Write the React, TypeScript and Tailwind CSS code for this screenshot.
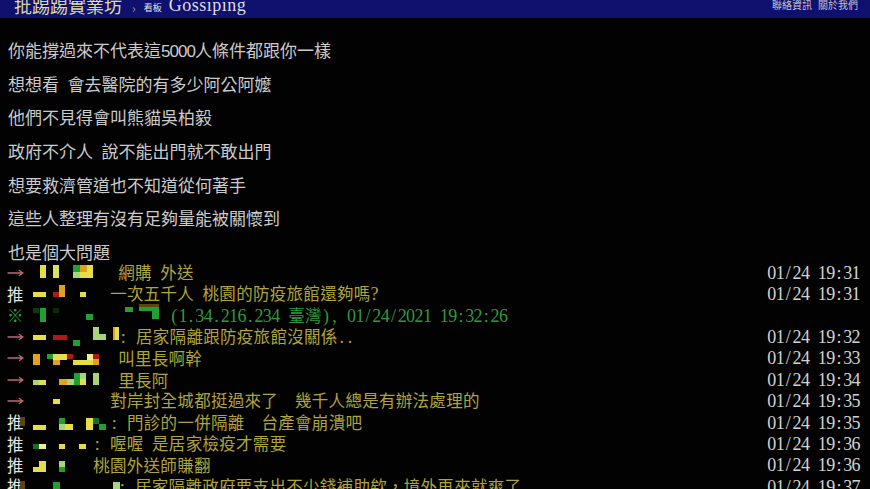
const Y = '#e6de48'
const LY = '#eef08a'
const G = '#1fa030'
const DG = '#11702a'
const LG = '#a6d676'
const O = '#e0a020'
const R = '#b01818'
const BR = '#5e4410'

type Block = [number, number, number, number, string]

type Push = {
  p: '→' | '推' | '※'
  x: number
  text: string
  time?: string
  green?: boolean
  blocks: Block[]
}

const lines = [
  '你能撐過來不代表這5000人條件都跟你一樣',
  '想想看 會去醫院的有多少阿公阿嬤',
  '他們不見得會叫熊貓吳柏毅',
  '政府不介人 說不能出門就不敢出門',
  '想要救濟管道也不知道從何著手',
  '這些人整理有沒有足夠量能被關懷到',
  '也是個大問題',
]

const pushes: Push[] = [
  {
    p: '→', x: 118, text: '網購 外送', time: '01/24 19:31',
    blocks: [[40, -8, 6, 13, Y], [53, -8, 6, 13, '#d8e060'], [73, -8, 7, 7, G], [80, -8, 7, 7, O], [87, -8, 6, 7, Y], [73, -1, 7, 6, LG], [80, -1, 13, 6, Y]],
  },
  {
    p: '推', x: 110, text: '一次五千人 桃園的防疫旅館還夠嗎?', time: '01/24 19:31',
    blocks: [[33, -2, 13, 5, Y], [53, -2, 6, 5, R], [59, -9, 6, 12, O], [80, -2, 6, 5, Y]],
  },
  {
    p: '※', x: 170, text: '(1.34.216.234 臺灣), 01/24/2021 19:32:26', green: true,
    blocks: [[33, -8, 6, 5, '#0c3a12'], [40, -8, 6, 14, G], [53, -8, 6, 5, '#0a2a0c'], [86, -2, 7, 6, G], [125, -9, 8, 5, G], [139, -12, 20, 3, BR], [139, -9, 20, 4, G], [152, -5, 7, 8, G]],
  },
  {
    p: '→', x: 119, text: ': 居家隔離跟防疫旅館沒關係..', time: '01/24 19:32',
    blocks: [[33, -2, 13, 5, Y], [53, -2, 14, 5, R], [73, 3, 7, 6, G], [93, -10, 6, 13, LG], [99, -3, 7, 6, LG], [113, -10, 6, 13, Y], [113, -10, 2, 13, O]],
  },
  {
    p: '→', x: 118, text: '叫里長啊幹', time: '01/24 19:33',
    blocks: [[33, -4, 7, 11, O], [47, -4, 6, 5, G], [53, -4, 14, 6, Y], [53, 2, 7, 5, O], [67, -4, 6, 5, R], [73, 2, 20, 5, Y], [87, -4, 6, 6, LY], [93, -4, 6, 5, R], [93, 1, 6, 6, O]],
  },
  {
    p: '→', x: 118, text: '里長阿', time: '01/24 19:34',
    blocks: [[33, 0, 6, 5, LG], [39, 0, 7, 5, Y], [59, -1, 8, 6, O], [67, -1, 7, 6, LG], [74, -7, 6, 12, G], [80, -7, 6, 6, LG], [80, -1, 6, 6, Y], [93, -7, 6, 12, LG]],
  },
  {
    p: '→', x: 110, text: '對岸封全城都挺過來了  幾千人總是有辦法處理的', time: '01/24 19:35',
    blocks: [[53, -2, 7, 5, Y]],
  },
  {
    p: '推', x: 110, text: ': 門診的一併隔離  台產會崩潰吧', time: '01/24 19:35',
    blocks: [[20, -6, 5, 9, BR], [33, 2, 13, 5, Y], [59, -5, 6, 6, G], [59, 1, 6, 6, LG], [65, 1, 8, 6, Y], [86, -5, 7, 12, Y], [93, -5, 6, 6, DG], [99, 1, 7, 6, G]],
  },
  {
    p: '推', x: 93, text: ': 喔喔 是居家檢疫才需要', time: '01/24 19:36',
    blocks: [[33, 0, 6, 5, DG], [39, 0, 7, 5, LY], [59, 0, 6, 5, Y], [79, 0, 7, 5, Y]],
  },
  {
    p: '推', x: 93, text: '桃園外送師賺翻', time: '01/24 19:36',
    blocks: [[33, 2, 7, 5, Y], [39, -4, 7, 11, Y], [59, -4, 6, 6, LG], [59, 2, 6, 5, G]],
  },
  {
    p: '推', x: 118, text: ': 居家隔離政府要支出不少錢補助欸，境外再來就爽了', time: '01/24 19:37',
    blocks: [[20, -6, 5, 9, BR], [53, -5, 7, 8, G], [113, -5, 7, 8, LG]],
  },
]

const isWide = (ch: string) => ch.charCodeAt(0) > 0x2000

// terminal-like cells: half-width chars take one cell, CJK takes two
function MainCells({ text }: { text: string }) {
  return (
    <>
      {Array.from(text).map((ch, i) =>
        isWide(ch) ? (
          <span key={i} className="inline-block w-[17px] text-center leading-none">{ch}</span>
        ) : (
          <span key={i} className="inline-block w-[8.5px] text-center leading-none font-['Liberation_Sans',sans-serif]">{ch}</span>
        )
      )}
    </>
  )
}

function PushCells({ text }: { text: string }) {
  return (
    <>
      {Array.from(text).map((ch, i) =>
        isWide(ch) ? (
          <span key={i} className="inline-block w-[16.8px] text-center">{ch}</span>
        ) : (
          <span key={i} className="inline-block w-[8.45px] text-center font-['Liberation_Serif',serif] text-[18px]">{ch}</span>
        )
      )}
    </>
  )
}

function Prefix({ p }: { p: Push['p'] }) {
  if (p === '→')
    return (
      <svg width="17" height="8" viewBox="0 0 17 8" className="block">
        <path d="M0.5 4H16M12 1.2L16 4L12 6.8" fill="none" stroke="#c4667a" strokeWidth="1.3" />
      </svg>
    )
  if (p === '※') return <span className="text-[#2aa040]">※</span>
  return <span className="text-[#e4e4e4]">推</span>
}

function PushRow({ row }: { row: Push }) {
  return (
    <div className="flex h-[21.4px] items-center whitespace-pre leading-none">
      <span className="flex w-[26px] shrink-0 pl-[7px]">
        <Prefix p={row.p} />
      </span>
      <svg width={row.x - 26} height={22} className="shrink-0 overflow-visible">
        {row.blocks.map(([bx, by, bw, bh, c], i) => (
          <rect key={i} x={bx - 26} y={by + 11} width={bw} height={bh} fill={c} />
        ))}
      </svg>
      <span className={row.green ? 'text-[#2f9a3c]' : 'text-[#b0a43c]'}>
        <PushCells text={row.text} />
      </span>
      {row.time && (
        <span className="ml-auto pr-[10px] text-[#d2d2d2]">
          <PushCells text={row.time} />
        </span>
      )}
    </div>
  )
}

export default function App() {
  return (
    <div className="h-[489px] w-[870px] overflow-hidden bg-[#020202] font-['Noto_Sans_CJK_TC',sans-serif]">
      {/* header bar */}
      <header className="flex h-[18px] items-center overflow-hidden bg-[#10106e] pl-[14px] pr-[12px]">
        <span className="-mt-[8px] text-[18px] leading-[18px] text-[#dedba6]">批踢踢實業坊</span>
        <span className="ml-[10px] -mt-[2px] text-[12px] leading-none text-[#9a9ab8]">›</span>
        <span className="ml-[8px] -mt-[3px] text-[9px] leading-none text-[#e4e4e4]">看板</span>
        <span className="ml-[7px] -mt-[8px] font-['Liberation_Serif',serif] text-[18px] leading-[18px] tracking-[0.5px] text-[#dedede]">
          Gossiping
        </span>
        <div className="ml-auto -mt-[8px] flex gap-[6px] text-[10px] leading-none text-[#c4c4d4]">
          <span>聯絡資訊</span>
          <span>關於我們</span>
        </div>
      </header>

      {/* post content */}
      <div className="pl-[8px] pt-[15px] text-[17px] leading-[33.7px] text-[#cbcbcb]">
        {lines.map((l, i) => (
          <div
            key={i}
            className={i === lines.length - 1 ? 'h-[27px] overflow-hidden whitespace-pre' : 'h-[33.7px] whitespace-pre'}
          >
            <MainCells text={l} />
          </div>
        ))}
      </div>

      {/* pushes */}
      <div className="text-[16.5px]">
        {pushes.map((row, i) => (
          <PushRow key={i} row={row} />
        ))}
      </div>
    </div>
  )
}
